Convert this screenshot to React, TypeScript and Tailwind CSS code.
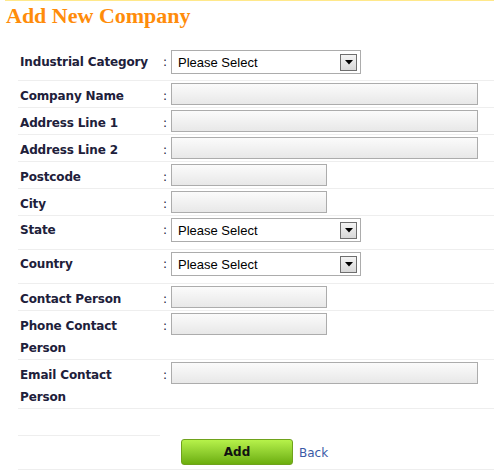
import React from "react";

const labelFont = { fontFamily: '"DejaVu Sans", Verdana, sans-serif' };

function TextBox({ wide }: { wide?: boolean }) {
  return (
    <div
      className={`h-[22px] border border-[#acacac] bg-gradient-to-b from-[#fbfbfb] to-[#e8e8e8] ${
        wide ? "w-[307px]" : "w-[156px]"
      }`}
    />
  );
}

function SelectBox() {
  return (
    <div className="mt-[1px] flex h-[24px] w-[190px] items-center justify-between border border-[#acacac] bg-white pl-[6px] pr-[3px]">
      <span
        className="text-[13px] text-black"
        style={{ fontFamily: '"Liberation Sans", Arial, sans-serif' }}
      >
        Please Select
      </span>
      <div className="flex h-[17px] w-[17px] items-center justify-center border border-[#6e6e6e] bg-gradient-to-b from-[#f4f4f4] to-[#d8d8d8]">
        <svg width="8" height="5" viewBox="0 0 8 5">
          <polygon points="0,0 8,0 4,4.5" fill="#000" />
        </svg>
      </div>
    </div>
  );
}

function Row({
  label,
  children,
  select,
  top,
}: {
  label: React.ReactNode;
  children: React.ReactNode;
  select?: boolean;
  top?: boolean;
}) {
  return (
    <div
      className={`flex border-b border-[#eeeeee] ${
        select ? (top ? "pt-[2px] pb-[6px]" : "pt-[1px] pb-[7px]") : "py-[2px]"
      }`}
    >
      <div
        className="mt-[2px] -mb-[2px] w-[142px] pl-[2px] pr-[6px] text-[12px] font-bold leading-[22px] tracking-[-0.15px] text-[#20203a]"
        style={labelFont}
      >
        {label}
      </div>
      <div
        className="mt-[2px] -mb-[2px] w-[11px] pl-[3px] text-[12px] leading-[22px] text-[#20203a]"
        style={labelFont}
      >
        :
      </div>
      <div className="leading-none">{children}</div>
    </div>
  );
}

export default function App() {
  return (
    <div className="w-[494px] h-[476px] bg-white overflow-hidden">
      <div className="ml-[5px] h-[1px] bg-[#ffe88a]" />
      <h1
        className="ml-[6px] mt-[2px] text-[22px] font-bold leading-[26px] text-[#ff8c0a]"
        style={{ fontFamily: '"Liberation Serif", "Times New Roman", serif' }}
      >
        Add New Company
      </h1>
      <div className="ml-[18px] mt-[18px]">
        <Row label="Industrial Category" select top>
          <SelectBox />
        </Row>
        <Row label="Company Name">
          <TextBox wide />
        </Row>
        <Row label="Address Line 1">
          <TextBox wide />
        </Row>
        <Row label="Address Line 2">
          <TextBox wide />
        </Row>
        <Row label="Postcode">
          <TextBox />
        </Row>
        <Row label="City">
          <TextBox />
        </Row>
        <Row label="State" select>
          <SelectBox />
        </Row>
        <Row label="Country" select>
          <SelectBox />
        </Row>
        <Row label="Contact Person">
          <TextBox />
        </Row>
        <Row label="Phone Contact Person">
          <TextBox />
        </Row>
        <Row label="Email Contact Person">
          <TextBox wide />
        </Row>
        <div className="h-[26px]" />
        <div className="w-[142px] border-b border-[#eeeeee]" />
        <div className="flex items-center border-b border-[#eeeeee] pt-[3px] pb-[4px]">
          <div className="w-[163px]" />
          <button
            className="flex h-[26px] w-[112px] items-center justify-center rounded-[3px] border border-[#6fa21c] bg-gradient-to-b from-[#b6f24a] to-[#6cae0c] text-[12px] font-bold text-[#111]"
            style={labelFont}
          >
            Add
          </button>
          <a
            className="ml-[6px] mt-[2px] text-[12px] text-[#3a5aa6]"
            style={labelFont}
            href="#"
          >
            Back
          </a>
        </div>
      </div>
    </div>
  );
}
